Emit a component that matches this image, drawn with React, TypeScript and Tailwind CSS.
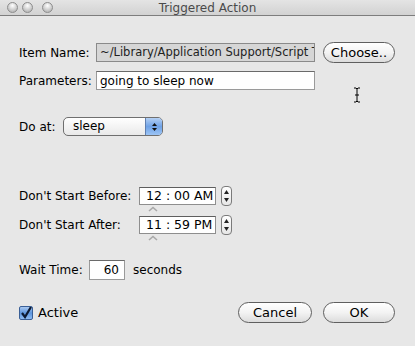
import React from "react";

const font = { fontFamily: '"DejaVu Sans", "Liberation Sans", sans-serif' };

function Light() {
  return (
    <div className="h-[11px] w-[11px] rounded-full border border-[#8d8d8d] bg-[radial-gradient(circle_at_50%_30%,#ffffff,#c9c9c9_60%,#a8a8a8)]" />
  );
}

function Stepper() {
  return (
    <div className="ml-[5px] flex h-[20px] w-[11px] flex-col items-center justify-between rounded-[4px] border border-[#7b7b7b] bg-gradient-to-b from-white to-[#e6e6e6] py-[3px]">
      <svg width="5" height="4" viewBox="0 0 5 4">
        <path d="M2.5 0 L5 4 L0 4 Z" fill="#222" />
      </svg>
      <svg width="5" height="4" viewBox="0 0 5 4">
        <path d="M0 0 L5 0 L2.5 4 Z" fill="#222" />
      </svg>
    </div>
  );
}

function Caret() {
  return (
    <div className="ml-[129px] h-[9px]">
      <svg width="10" height="6" viewBox="0 0 10 6">
        <path d="M1 5 L5 1.5 L9 5" fill="none" stroke="#a9a9a9" strokeWidth="1.6" />
      </svg>
    </div>
  );
}

function TimeRow({ label, value }: { label: string; value: string }) {
  return (
    <div className="flex h-[20px] items-center">
      <span className="w-[120px]">{label}</span>
      <div className="flex h-[18px] w-[77px] items-center whitespace-nowrap border border-[#8e8e8e] border-t-[#5e5e5e] bg-white pl-[6px] text-[12.5px]">
        {value}
      </div>
      <Stepper />
    </div>
  );
}

function Pill({ children, w }: { children: React.ReactNode; w: string }) {
  return (
    <button
      className={`flex h-[21px] ${w} items-center justify-center whitespace-nowrap rounded-full border border-[#5f5f5f] bg-gradient-to-b from-white via-[#f3f3f3] to-[#dcdcdc] text-[13px] text-black`}
    >
      {children}
    </button>
  );
}

export default function App() {
  return (
    <div className="relative h-[346px] w-[415px] overflow-hidden bg-[#e7e7e7] text-[12px] text-black" style={font}>
      {/* title bar */}
      <div className="relative flex h-[16px] items-center border-b border-[#7d7d7d] bg-gradient-to-b from-[#e4e4e4] to-[#d2d2d2]">
        <div className="ml-[7px] flex gap-[4px]">
          <Light />
          <Light />
          <div className="ml-[5px]">
            <Light />
          </div>
        </div>
        <span className="absolute left-0 right-0 text-center text-[12px] leading-[16px] text-[#4a4a4a]">Triggered Action</span>
      </div>

      <div className="flex flex-col pl-[19px]">
        {/* item name */}
        <div className="mt-[26px] flex h-[21px] items-center">
          <span className="w-[77px]">Item Name:</span>
          <div className="flex h-[19px] w-[219px] items-center overflow-hidden whitespace-nowrap border border-[#8a8a8a] bg-[#d6d6d6] pl-[3px] text-[11.5px] text-[#222]">
            ~/Library/Application Support/Script Timer/sleep.scpt
          </div>
          <div className="ml-[8px]">
            <Pill w="w-[72px]">Choose..</Pill>
          </div>
        </div>

        {/* parameters */}
        <div className="mt-[8px] flex h-[19px] items-center">
          <span className="w-[77px]">Parameters:</span>
          <div className="flex h-[19px] w-[219px] items-center border border-[#9a9a9a] border-t-[#6a6a6a] bg-white pl-[3px]">
            going to sleep now
          </div>
        </div>

        {/* do at */}
        <div className="mt-[27px] flex h-[19px] items-center">
          <span className="w-[44px]">Do at:</span>
          <div className="flex h-[19px] w-[100px] overflow-hidden rounded-[5px] border border-[#6f6f6f] bg-gradient-to-b from-white to-[#e9e9e9]">
            <span className="flex-1 pl-[9px] leading-[17px]">sleep</span>
            <div className="flex w-[17px] flex-col items-center justify-center gap-[2px] border-l border-[#5f7fb0] bg-gradient-to-b from-[#b4d0f4] via-[#6fa2e6] to-[#9cc4f5]">
              <svg width="5" height="3" viewBox="0 0 5 3">
                <path d="M2.5 0 L5 3 L0 3 Z" fill="#111" />
              </svg>
              <svg width="5" height="3" viewBox="0 0 5 3">
                <path d="M0 0 L5 0 L2.5 3 Z" fill="#111" />
              </svg>
            </div>
          </div>
        </div>

        {/* times */}
        <div className="mt-[50px]">
          <TimeRow label="Don't Start Before:" value="12 : 00 AM" />
        </div>
        <Caret />
        <TimeRow label="Don't Start After:" value="11 : 59 PM" />
        <Caret />

        {/* wait time */}
        <div className="mt-[16px] flex h-[20px] items-center">
          <span className="w-[70px]">Wait Time:</span>
          <div className="flex h-[20px] w-[36px] items-center justify-end border border-[#9a9a9a] border-t-[#6a6a6a] bg-white pr-[5px]">
            60
          </div>
          <span className="ml-[8px]">seconds</span>
        </div>

        {/* bottom row */}
        <div className="mt-[22px] flex h-[21px] items-center">
          <div className="flex h-[14px] w-[14px] items-center justify-center rounded-[2px] border border-[#3a5f96] bg-gradient-to-b from-[#a9c8f0] via-[#5d95dd] to-[#8dbbf2]">
            <svg width="12" height="12" viewBox="0 0 12 12">
              <path d="M2 6 L5 10 L11 0" fill="none" stroke="#0c1a33" strokeWidth="2.2" />
            </svg>
          </div>
          <span className="ml-[5px] text-[13px]">Active</span>
          <div className="ml-auto mr-[20px] flex gap-[11px]">
            <Pill w="w-[74px]">Cancel</Pill>
            <Pill w="w-[72px]">OK</Pill>
          </div>
        </div>
      </div>

      {/* text cursor */}
      <svg className="absolute left-[353px] top-[87px]" width="8" height="16" viewBox="0 0 8 16">
        <path d="M1 1 L3 1 L4 2 L5 1 L7 1 M4 2 L4 14 M1 15 L3 15 L4 14 L5 15 L7 15 M2 8 L6 8" fill="none" stroke="#000" strokeWidth="1" />
      </svg>
    </div>
  );
}
